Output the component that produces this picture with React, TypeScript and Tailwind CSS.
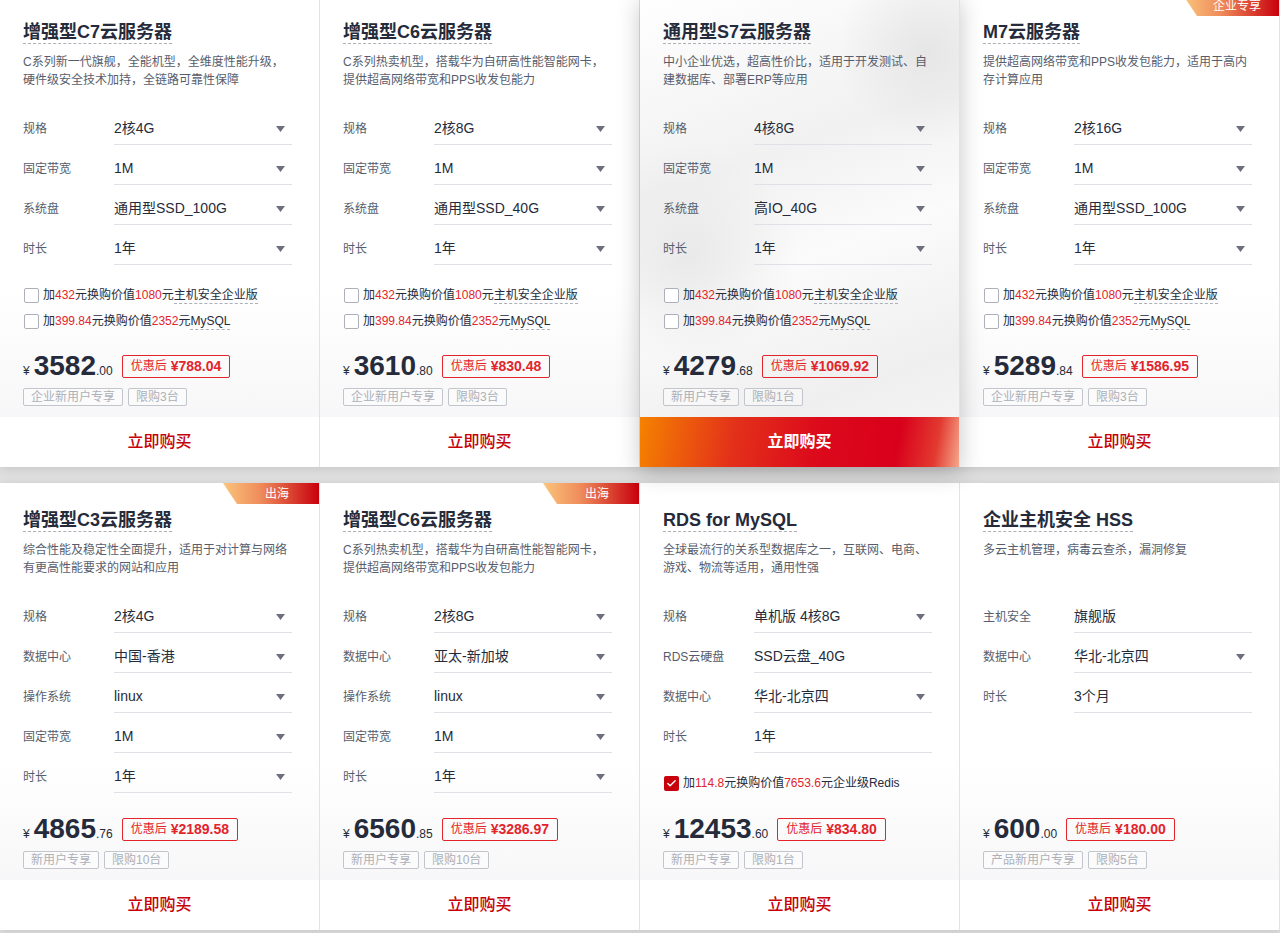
import { Check } from "lucide-react";

type Row = { label: string; value: string; arrow?: boolean };
type Addon = { add: string; worth: string; name: string; dashed?: boolean; checked?: boolean };
type Product = {
  title: string;
  desc: string;
  badge?: string;
  rows: Row[];
  addons: Addon[];
  price: string;
  dec: string;
  discount: string;
  tags: string[];
  hot?: boolean;
};

const hostAddons: Addon[] = [
  { add: "432", worth: "1080", name: "主机安全企业版", dashed: true },
  { add: "399.84", worth: "2352", name: "MySQL", dashed: true },
];

const row1: Product[] = [
  {
    title: "增强型C7云服务器",
    desc: "C系列新一代旗舰，全能机型，全维度性能升级，硬件级安全技术加持，全链路可靠性保障",
    rows: [
      { label: "规格", value: "2核4G", arrow: true },
      { label: "固定带宽", value: "1M", arrow: true },
      { label: "系统盘", value: "通用型SSD_100G", arrow: true },
      { label: "时长", value: "1年", arrow: true },
    ],
    addons: hostAddons,
    price: "3582",
    dec: ".00",
    discount: "¥788.04",
    tags: ["企业新用户专享", "限购3台"],
  },
  {
    title: "增强型C6云服务器",
    desc: "C系列热卖机型，搭载华为自研高性能智能网卡，提供超高网络带宽和PPS收发包能力",
    rows: [
      { label: "规格", value: "2核8G", arrow: true },
      { label: "固定带宽", value: "1M", arrow: true },
      { label: "系统盘", value: "通用型SSD_40G", arrow: true },
      { label: "时长", value: "1年", arrow: true },
    ],
    addons: hostAddons,
    price: "3610",
    dec: ".80",
    discount: "¥830.48",
    tags: ["企业新用户专享", "限购3台"],
  },
  {
    title: "通用型S7云服务器",
    desc: "中小企业优选，超高性价比，适用于开发测试、自建数据库、部署ERP等应用",
    rows: [
      { label: "规格", value: "4核8G", arrow: true },
      { label: "固定带宽", value: "1M", arrow: true },
      { label: "系统盘", value: "高IO_40G", arrow: true },
      { label: "时长", value: "1年", arrow: true },
    ],
    addons: hostAddons,
    price: "4279",
    dec: ".68",
    discount: "¥1069.92",
    tags: ["新用户专享", "限购1台"],
    hot: true,
  },
  {
    title: "M7云服务器",
    desc: "提供超高网络带宽和PPS收发包能力，适用于高内存计算应用",
    badge: "企业专享",
    rows: [
      { label: "规格", value: "2核16G", arrow: true },
      { label: "固定带宽", value: "1M", arrow: true },
      { label: "系统盘", value: "通用型SSD_100G", arrow: true },
      { label: "时长", value: "1年", arrow: true },
    ],
    addons: hostAddons,
    price: "5289",
    dec: ".84",
    discount: "¥1586.95",
    tags: ["企业新用户专享", "限购3台"],
  },
];

const row2: Product[] = [
  {
    title: "增强型C3云服务器",
    desc: "综合性能及稳定性全面提升，适用于对计算与网络有更高性能要求的网站和应用",
    badge: "出海",
    rows: [
      { label: "规格", value: "2核4G", arrow: true },
      { label: "数据中心", value: "中国-香港", arrow: true },
      { label: "操作系统", value: "linux", arrow: true },
      { label: "固定带宽", value: "1M", arrow: true },
      { label: "时长", value: "1年", arrow: true },
    ],
    addons: [],
    price: "4865",
    dec: ".76",
    discount: "¥2189.58",
    tags: ["新用户专享", "限购10台"],
  },
  {
    title: "增强型C6云服务器",
    desc: "C系列热卖机型，搭载华为自研高性能智能网卡，提供超高网络带宽和PPS收发包能力",
    badge: "出海",
    rows: [
      { label: "规格", value: "2核8G", arrow: true },
      { label: "数据中心", value: "亚太-新加坡", arrow: true },
      { label: "操作系统", value: "linux", arrow: true },
      { label: "固定带宽", value: "1M", arrow: true },
      { label: "时长", value: "1年", arrow: true },
    ],
    addons: [],
    price: "6560",
    dec: ".85",
    discount: "¥3286.97",
    tags: ["新用户专享", "限购10台"],
  },
  {
    title: "RDS for MySQL",
    desc: "全球最流行的关系型数据库之一，互联网、电商、游戏、物流等适用，通用性强",
    rows: [
      { label: "规格", value: "单机版 4核8G", arrow: true },
      { label: "RDS云硬盘", value: "SSD云盘_40G" },
      { label: "数据中心", value: "华北-北京四", arrow: true },
      { label: "时长", value: "1年" },
    ],
    addons: [{ add: "114.8", worth: "7653.6", name: "企业级Redis", checked: true }],
    price: "12453",
    dec: ".60",
    discount: "¥834.80",
    tags: ["新用户专享", "限购1台"],
  },
  {
    title: "企业主机安全 HSS",
    desc: "多云主机管理，病毒云查杀，漏洞修复",
    rows: [
      { label: "主机安全", value: "旗舰版" },
      { label: "数据中心", value: "华北-北京四", arrow: true },
      { label: "时长", value: "3个月" },
    ],
    addons: [],
    price: "600",
    dec: ".00",
    discount: "¥180.00",
    tags: ["产品新用户专享", "限购5台"],
  },
];

const Caret = () => (
  <svg width="9" height="6" viewBox="0 0 9 6" className="shrink-0">
    <path d="M0 0h9L4.5 6z" fill="#6b707c" />
  </svg>
);

const ProductCard = ({ p, tall }: { p: Product; tall: boolean }) => (
  <div
    className={`relative flex flex-col border-r border-[#e2e3e6] ${tall ? "h-[472px]" : "h-[447px]"} ${
      p.hot
        ? "z-10 shadow-[0_6px_22px_rgba(0,0,0,0.22)] bg-[radial-gradient(circle_at_90%_12%,#e6e6e6_0,transparent_90px),radial-gradient(circle_at_15%_55%,#e9e9e9_0,transparent_110px),linear-gradient(160deg,#ffffff_0%,#f1f1f1_35%,#fbfbfb_55%,#efefef_80%,#f7f7f7_100%)]"
        : "bg-[linear-gradient(180deg,#ffffff_62%,#f4f4f6_100%)]"
    }`}
  >
    {p.badge && (
      <div className="absolute top-0 right-0 w-[96px] h-[21px] rounded-bl-[14px] [clip-path:polygon(0_0,100%_0,100%_100%,14px_100%)] bg-[linear-gradient(90deg,#fbc57c_0%,#ee8a5a_40%,#c8000c_100%)] flex items-center justify-end text-[12px] text-white">
        <span className="w-[84px] text-center">{p.badge}</span>
      </div>
    )}

    <div className="pl-[23px] pr-[27px] pt-[26px] flex flex-col">
      <div className="self-start h-[23px] border-b border-dashed border-[#adb0b8] text-[18px] leading-[22px] font-bold text-[#252b3a]">
        {p.title}
      </div>
      <p className="mt-[9px] h-[36px] text-[12px] leading-[18px] text-[#575d6c]">{p.desc}</p>

      <div className="mt-[24px] flex flex-col gap-[8px]">
        {p.rows.map((r) => (
          <div key={r.label} className="flex items-center h-[32px]">
            <span className="w-[91px] text-[12px] text-[#575d6c]">{r.label}</span>
            <div className="flex-1 h-[32px] flex items-center justify-between border-b border-[#dfe1e6] pr-[7px]">
              <span className="text-[14px] text-[#252b3a]">{r.value}</span>
              {r.arrow && <Caret />}
            </div>
          </div>
        ))}
      </div>

      {p.addons.length > 0 && (
        <div className="mt-[20px] flex flex-col gap-[6px]">
          {p.addons.map((a) => (
            <div key={a.name} className="flex items-center h-[20px] text-[12px] text-[#252b3a]">
              {a.checked ? (
                <span className="ml-[1px] w-[15px] h-[15px] rounded-[2px] bg-[#c7000b] flex items-center justify-center">
                  <Check className="w-[11px] h-[11px] text-white" strokeWidth={3} />
                </span>
              ) : (
                <span className="ml-[1px] w-[15px] h-[15px] rounded-[2px] border border-[#adb0b8] bg-white" />
              )}
              <span className="ml-[4px]">
                加<span className="text-[#e1252b]">{a.add}</span>元换购价值
                <span className="text-[#e1252b]">{a.worth}</span>元
                <span className={a.dashed ? "border-b border-dashed border-[#adb0b8] pb-[1px]" : ""}>{a.name}</span>
              </span>
            </div>
          ))}
        </div>
      )}
    </div>

    <div className="mt-auto px-[23px] pb-[11px] flex flex-col gap-[8px]">
      <div className="h-[28px] flex items-center">
        <div className="flex items-baseline text-[#252b3a]">
          <span className="text-[12px] mr-[4px]">¥</span>
          <span className="text-[28px] leading-[28px] font-bold">{p.price}</span>
          <span className="text-[12px]">{p.dec}</span>
        </div>
        <div className="ml-[9px] h-[23px] px-[8px] flex items-center gap-[4px] border border-[#e1252b] rounded-[2px] text-[#e1252b]">
          <span className="text-[12px]">优惠后</span>
          <span className="text-[14px] font-bold">{p.discount}</span>
        </div>
      </div>
      <div className="flex gap-[5px]">
        {p.tags.map((t) => (
          <span
            key={t}
            className="h-[18px] px-[7px] flex items-center border border-[#c2c5cc] rounded-[2px] text-[12px] text-[#adb0b8] bg-white/40"
          >
            {t}
          </span>
        ))}
      </div>
    </div>

    <button
      className={`h-[50px] w-full shrink-0 flex items-center justify-center text-[16px] ${
        p.hot
          ? "text-white font-bold bg-[linear-gradient(100deg,#f58200_0%,#e3301a_30%,#dc0a1b_55%,#d9001b_80%,#e23a30_92%,#f5a78c_100%)]"
          : "bg-white text-[#c7000b] font-medium"
      }`}
    >
      立即购买
    </button>
  </div>
);

export default function App() {
  return (
    <div className="min-h-[933px] w-[1280px] bg-[#e0e0e0] overflow-hidden font-['Liberation_Sans','Noto_Sans_CJK_SC',sans-serif]">
      <div className="-mt-[5px] flex flex-col gap-[16px]">
        <div className="grid grid-cols-4 shadow-[0_2px_10px_rgba(0,0,0,0.12)]">
          {row1.map((p) => (
            <ProductCard key={p.title + p.price} p={p} tall />
          ))}
        </div>
        <div className="grid grid-cols-4 shadow-[0_2px_10px_rgba(0,0,0,0.12)]">
          {row2.map((p) => (
            <ProductCard key={p.title + p.price} p={p} tall={false} />
          ))}
        </div>
      </div>
    </div>
  );
}
